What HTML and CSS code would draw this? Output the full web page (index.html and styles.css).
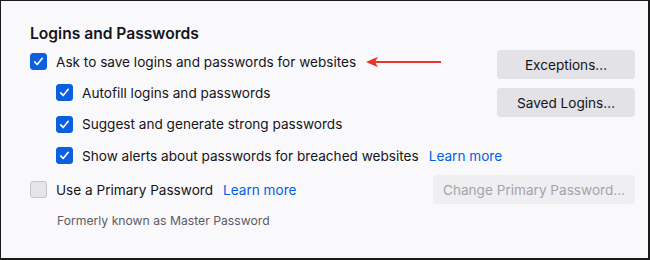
FILE: index.html
```html
<!DOCTYPE html>
<html>
<head>
<meta charset="utf-8">
<link rel="stylesheet" href="styles.css">
</head>
<body>
<div class="frame">
  <h2 class="title">Logins and Passwords</h2>
  <div class="section">
    <div class="options">
      <div class="row">
        <span class="box checked"><svg viewBox="0 0 16 16"><path d="M4 8.4l2.6 2.8L12 4.6"/></svg></span>
        <span class="label">Ask to save logins and passwords for websites</span>
        <svg class="arrow" width="76" height="12" viewBox="0 0 76 12"><path class="shaft" d="M8 6H75"/><path class="head" d="M0 6L12 0.8L9 6L12 11.2Z"/></svg>
      </div>
      <div class="row sub">
        <span class="box checked"><svg viewBox="0 0 16 16"><path d="M4 8.4l2.6 2.8L12 4.6"/></svg></span>
        <span class="label">Autofill logins and passwords</span>
      </div>
      <div class="row sub">
        <span class="box checked"><svg viewBox="0 0 16 16"><path d="M4 8.4l2.6 2.8L12 4.6"/></svg></span>
        <span class="label">Suggest and generate strong passwords</span>
      </div>
      <div class="row sub">
        <span class="box checked"><svg viewBox="0 0 16 16"><path d="M4 8.4l2.6 2.8L12 4.6"/></svg></span>
        <span class="label">Show alerts about passwords for breached websites</span>
        <a class="link">Learn more</a>
      </div>
    </div>
    <div class="buttons">
      <button class="btn">Exceptions…</button>
      <button class="btn">Saved Logins…</button>
    </div>
  </div>
  <div class="section primary">
    <div class="row">
      <span class="box"></span>
      <span class="label">Use a Primary Password</span>
      <a class="link">Learn more</a>
    </div>
    <button class="btn disabled">Change Primary Password…</button>
  </div>
  <p class="note">Formerly known as Master Password</p>
</div>
</body>
</html>
```
FILE: styles.css
```css
html, body {
  margin: 0;
  padding: 0;
  background: #f9f9fb;
}
.frame {
  box-sizing: border-box;
  width: 650px;
  height: 260px;
  border: 1px solid #1a1a1a;
  border-bottom-width: 2px;
  border-right-width: 2px;
  background: #f9f9fb;
  padding: 23px 13px 0 29px;
  font-family: Inter, "Noto Sans", sans-serif;
  font-size: 13.6px;
  color: #15141a;
}
.title {
  margin: 0;
  font-size: 15.6px;
  font-weight: 600;
  line-height: 20px;
}
.section {
  display: flex;
  justify-content: space-between;
  align-items: flex-start;
}
.options {
  display: flex;
  flex-direction: column;
  flex: 1;
  min-width: 0;
  padding-top: 2px;
}
.row {
  display: flex;
  align-items: center;
  height: 31.3px;
  white-space: nowrap;
}
.row.sub {
  padding-left: 26px;
}
.box {
  box-sizing: border-box;
  width: 17px;
  height: 17px;
  border-radius: 3px;
  border: 1px solid #c4c4c9;
  background: #e6e6ea;
  display: flex;
  align-items: center;
  justify-content: center;
  flex: none;
}
.box.checked {
  background: #0a60df;
  border-color: #0a60df;
}
.box svg {
  width: 15px;
  height: 15px;
  fill: none;
  stroke: #fff;
  stroke-width: 1.8;
  stroke-linecap: round;
  stroke-linejoin: round;
}
.label {
  margin-left: 9px;
  flex: none;
}
.link {
  margin-left: 10px;
  color: #0061e0;
  flex: none;
}
.arrow {
  margin-left: 10px;
  flex: none;
}
.arrow .shaft {
  stroke: #e8362a;
  stroke-width: 2;
}
.arrow .head {
  fill: #e8362a;
}
.buttons {
  display: flex;
  flex-direction: column;
  flex: none;
  gap: 9px;
  padding-top: 6px;
}
.btn {
  box-sizing: border-box;
  width: 138px;
  height: 29px;
  border: none;
  border-radius: 4px;
  background: #e2e2e7;
  color: #15141a;
  font-family: inherit;
  font-size: 13.6px;
  padding: 0;
}
.primary {
  margin-top: 3px;
  align-items: center;
}
.btn.disabled {
  width: 202px;
  background: #efeff2;
  color: #a3a3a8;
}
.note {
  margin: 8px 0 0 27px;
  font-size: 12.2px;
  color: #5b5b66;
}
```
